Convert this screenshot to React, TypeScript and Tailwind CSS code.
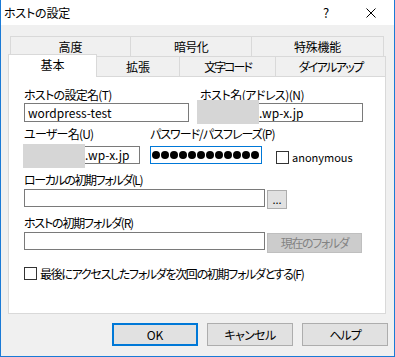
import React from "react";

const Input = ({
  className = "",
  children,
}: {
  className?: string;
  children?: React.ReactNode;
}) => (
  <div
    className={
      "relative bg-white border border-[#7a7a7a] flex items-center whitespace-nowrap overflow-visible " +
      className
    }
  >
    {children}
  </div>
);

export default function App() {
  return (
    <div className="w-[395px] h-[357px] flex flex-col bg-[#f0f0f0] border-x border-b border-[#1a7ad6] text-[12px] leading-[16px] text-black font-['Noto_Sans_CJK_JP','Noto_Sans',sans-serif] [font-feature-settings:'palt'] overflow-hidden whitespace-nowrap">
      {/* Title bar */}
      <div className="h-[25px] shrink-0 bg-white flex items-center">
        <span className="pl-[3px] tracking-[-0.2px]">ホストの設定</span>
        <span className="ml-auto w-[8px] text-center text-[13px]">?</span>
        <svg
          className="ml-[36px] mr-[18px]"
          width="10"
          height="10"
          viewBox="0 0 10 10"
        >
          <path d="M0.5 0.5 L9.5 9.5 M9.5 0.5 L0.5 9.5" stroke="#000" strokeWidth="1" />
        </svg>
      </div>

      {/* Tabs + panel */}
      <div className="pl-[7px] mt-[11px]">
        {/* row 1 */}
        <div className="flex ml-[2px] h-[20px]">
          <div className="w-[121px] border-l border-t border-r border-[#d9d9d9] flex items-center justify-center">
            高度
          </div>
          <div className="w-[121px] border-t border-r border-[#d9d9d9] flex items-center justify-center tracking-[-0.6px]">
            暗号化
          </div>
          <div className="w-[132px] border-t border-r border-[#d9d9d9] flex items-center justify-center tracking-[-0.2px]">
            特殊機能
          </div>
        </div>
        {/* row 2 */}
        <div className="flex items-end h-[22px] -mt-[2px]">
          <div className="relative z-10 w-[89px] h-[23px] -mb-[1px] bg-white border-l border-t border-r border-[#d9d9d9] flex items-center justify-center pb-[3px]">
            基本
          </div>
          <div className="w-[83px] h-[20px] border-t border-r border-[#d9d9d9] flex items-center justify-center">
            拡張
          </div>
          <div className="w-[96px] h-[20px] border-t border-r border-[#d9d9d9] flex items-center justify-center tracking-[-2px]">
            文字コード
          </div>
          <div className="w-[110px] h-[20px] border-t border-r border-[#d9d9d9] flex items-center justify-center tracking-[-1.6px]">
            ダイアルアップ
          </div>
        </div>

        {/* panel */}
        <div className="w-[378px] h-[238px] bg-white border border-[#d9d9d9] pl-[15px] pt-[10px] flex flex-col">
          {/* Row A */}
          <div className="flex">
            <div className="w-[165px] flex flex-col">
              <div className="h-[16px] tracking-[-0.7px]">ホストの設定名(T)</div>
              <Input className="h-[19px] pl-[3px]">wordpress-test</Input>
            </div>
            <div className="ml-[11px] w-[163px] flex flex-col">
              <div className="h-[16px] tracking-[-0.5px]">ホスト名(アドレス)(N)</div>
              <Input className="h-[19px] pl-[58px]">
                <div className="absolute left-[-4px] top-[-4px] w-[62px] h-[24px] bg-[#d6d6d6]" />
                .wp-x.jp
              </Input>
            </div>
          </div>

          {/* Row B */}
          <div className="flex mt-[4px] h-[16px]">
            <div className="w-[116px] tracking-[-0.75px]">ユーザー名(U)</div>
            <div className="ml-[10px] tracking-[-1px]">パスワード/パスフレーズ(P)</div>
          </div>
          <div className="flex mt-[4px] items-start">
            <Input className="w-[116px] h-[18px] pl-[60px]">
              <div className="absolute left-[-2px] top-[-3px] w-[62px] h-[24px] bg-[#d6d6d6]" />
              .wp-x.jp
            </Input>
            <div className="ml-[10px] w-[112px] h-[18px] bg-white border border-[#0078d7] flex items-center justify-end overflow-hidden pr-[2px]">
              {Array.from({ length: 12 }).map((_, i) => (
                <span
                  key={i}
                  className="shrink-0 w-[8px] h-[8px] rounded-full bg-black ml-[1px]"
                />
              ))}
            </div>
            <div className="ml-[14px] mt-[5px] flex items-center">
              <div className="w-[13px] h-[13px] border border-[#333333] bg-white" />
              <span className="ml-[3px] leading-[13px] text-[11px]">anonymous</span>
            </div>
          </div>

          {/* Row C */}
          <div className="mt-[8px] h-[16px] tracking-[-1.4px]">ローカルの初期フォルダ(L)</div>
          <div className="flex mt-[1px] items-start">
            <Input className="w-[241px] h-[18px]" />
            <div className="ml-[2px] mt-[1px] w-[20px] h-[19px] bg-[#e1e1e1] border border-[#adadad] flex items-center justify-center text-[11px] leading-[11px]">
              ...
            </div>
          </div>

          {/* Row D */}
          <div className="mt-[6px] h-[16px] tracking-[-1.2px]">ホストの初期フォルダ(R)</div>
          <div className="flex mt-[1px] items-start">
            <Input className="w-[241px] h-[18px]" />
            <div className="ml-[2px] mt-[1px] w-[95px] h-[20px] bg-[#cccccc] border border-[#bfbfbf] flex items-center justify-center text-[#838383] tracking-[-1.4px]">
              現在のフォルダ
            </div>
          </div>

          {/* Checkbox */}
          <div className="mt-[14px] flex items-center">
            <div className="w-[13px] h-[13px] border border-[#333333] bg-white" />
            <span className="ml-[3px] leading-[13px] tracking-[-1.3px]">
              最後にアクセスしたフォルダを次回の初期フォルダとする(F)
            </span>
          </div>
        </div>
      </div>

      {/* Buttons */}
      <div className="mt-[9px] flex justify-end gap-[9px] pr-[6px]">
        <div className="w-[86px] h-[23px] bg-[#e1e1e1] border-2 border-[#0078d7] flex items-center justify-center">
          OK
        </div>
        <div className="w-[86px] h-[23px] bg-[#e1e1e1] border border-[#adadad] flex items-center justify-center tracking-[-0.6px]">
          キャンセル
        </div>
        <div className="w-[86px] h-[23px] bg-[#e1e1e1] border border-[#adadad] flex items-center justify-center tracking-[-1px]">
          ヘルプ
        </div>
      </div>
    </div>
  );
}
